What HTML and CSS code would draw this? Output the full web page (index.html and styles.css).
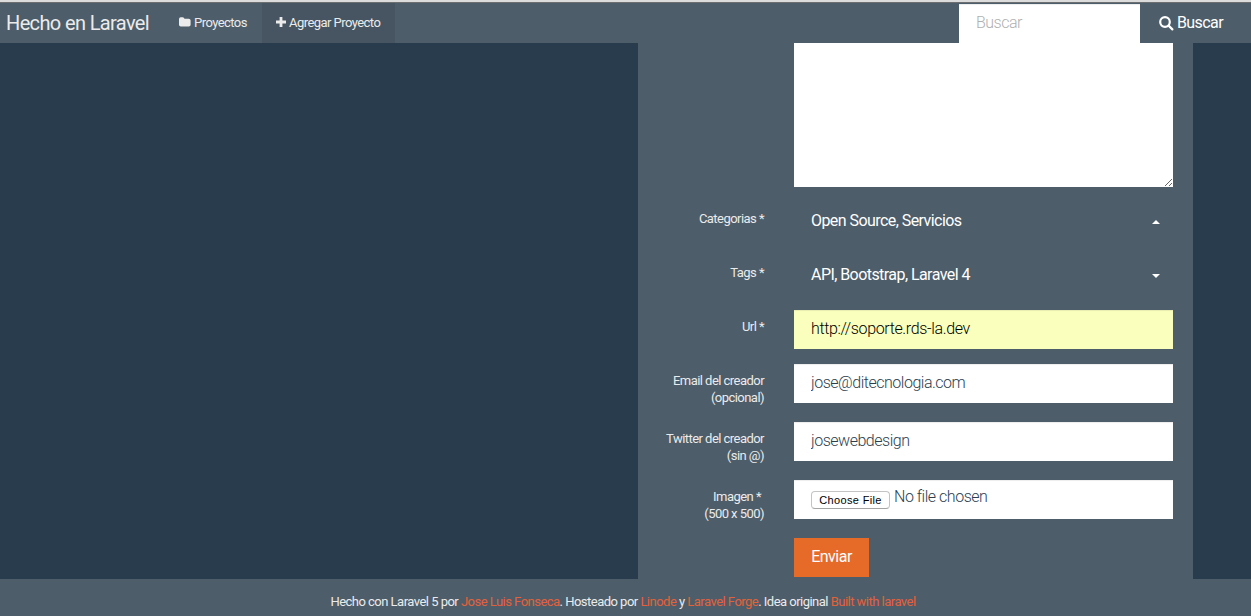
FILE: index.html
```html
<!DOCTYPE html>
<html lang="es">
<head>
<meta charset="utf-8">
<title>Hecho en Laravel</title>
<link rel="stylesheet" href="styles.css">
</head>
<body>
<header class="navbar">
  <a class="brand">Hecho en Laravel</a>
  <nav class="menu">
    <a class="menu-item"><svg class="icon-folder" viewBox="0 0 12 10"><path d="M0 2Q0 .2 1.8.2H3.6Q5.4.2 5.4 1.8H9.8Q11.6 1.8 11.6 3.6V7.8Q11.6 9.6 9.8 9.6H1.8Q0 9.6 0 7.8Z"/></svg><span>Proyectos</span></a>
    <a class="menu-item add active"><svg class="icon-plus" viewBox="0 0 10 10"><path d="M3.6 0H6.4V3.6H10V6.4H6.4V10H3.6V6.4H0V3.6H3.6Z"/></svg><span>Agregar Proyecto</span></a>
  </nav>
  <form class="search">
    <input class="search-input" type="text" placeholder="Buscar">
    <button class="search-button" type="button"><svg class="icon-search" viewBox="0 0 15 15"><circle cx="6" cy="6" r="4.8"/><path d="M9.6 9.6L13.4 13.4"/></svg><span>Buscar</span></button>
  </form>
</header>
<main class="content">
  <form class="panel">
    <div class="row"><span class="label"></span><textarea class="control area"></textarea></div>
    <div class="row"><label class="label">Categorias *</label><div class="control select"><span>Open Source, Servicios</span><svg class="caret" viewBox="0 0 8 4"><path d="M0 4L4 0L8 4Z"/></svg></div></div>
    <div class="row"><label class="label">Tags *</label><div class="control select"><span>API, Bootstrap, Laravel 4</span><svg class="caret" viewBox="0 0 8 4"><path d="M0 0L4 4L8 0Z"/></svg></div></div>
    <div class="row"><label class="label">Url *</label><input class="control filled" type="text" value="http://soporte.rds-la.dev"></div>
    <div class="row"><label class="label">Email del creador<br>(opcional)</label><input class="control" type="text" value="jose@ditecnologia.com"></div>
    <div class="row"><label class="label">Twitter del creador<br>(sin @)</label><input class="control" type="text" value="josewebdesign"></div>
    <div class="row"><label class="label"><span class="first-line">Imagen *</span><br>(500 x 500)</label><div class="control file"><button class="choose" type="button">Choose File</button><span class="file-name">No file chosen</span></div></div>
    <div class="row"><span class="label"></span><button class="submit" type="button">Enviar</button></div>
  </form>
</main>
<footer class="footer"><p class="credits">Hecho con Laravel 5 por <a>Jose Luis Fonseca</a>. Hosteado por <a>Linode</a> y <a>Laravel Forge</a>. Idea original <a>Built with laravel</a></p></footer>
</body>
</html>
```
FILE: styles.css
```css
* { box-sizing: border-box; }
body {
  margin: 0;
  height: 616px;
  display: flex;
  flex-direction: column;
  overflow: hidden;
  background: #4d5d6a;
  color: #ebebeb;
  font: 13px/17px Roboto, sans-serif;
}
input, textarea, button { font-family: inherit; border: 0; border-radius: 0; margin: 0; outline: 0; }
svg { flex: none; fill: currentColor; }
.navbar {
  flex: none;
  display: flex;
  height: 43px;
  border-top: 2px solid #dcdcdc;
  box-shadow: inset 0 1px #6c6f71;
  padding-top: 1px;
}
.brand { width: 164px; padding: 0 0 0 6px; font-size: 20px; line-height: 40px; letter-spacing: -.63px; white-space: nowrap; }
.menu { display: flex; }
.menu-item { display: flex; align-items: center; width: 98px; padding: 0 0 2px 15px; letter-spacing: -.55px; white-space: nowrap; }
.add { width: 133px; padding-left: 14px; }
.active { background: #465561; }
.icon-folder { width: 12px; height: 10px; margin-right: 3px; }
.icon-plus { width: 10px; height: 10px; margin-right: 3px; }
.search { display: flex; margin-left: auto; padding-top: 1px; }
.search-input { width: 181px; height: 39px; padding: 0 17px 2px; background: #fff; font-size: 16px; font-weight: 300; letter-spacing: -.5px; box-shadow: inset 0 1px 1px rgba(0,0,0,.075); }
.search-input::placeholder { color: #b0b0b0; opacity: 1; }
.search-button { display: flex; align-items: center; width: 111px; padding: 0 0 2px 19px; background: none; color: #fff; font-size: 16px; letter-spacing: -.6px; }
.icon-search { width: 15px; height: 15px; margin: 1px 3px 0 0; fill: none; stroke: currentColor; stroke-width: 2.2; stroke-linecap: round; }
.content { flex: none; height: 536px; background: #283c4d; padding-right: 58px; }
.panel { width: 555px; height: 536px; margin-left: auto; padding-right: 20px; background: #4d5d6a; display: flex; flex-direction: column; gap: 15px; }
.row { display: flex; gap: 30px; }
.label { width: 126px; padding: 8px 0 1px; text-align: right; letter-spacing: -.54px; }
.first-line { padding-right: 3px; }
.control { width: 379px; height: 39px; padding: 0 17px 2px; background: #fff; color: #2b3e50; font-size: 16px; font-weight: 300; letter-spacing: -.48px; box-shadow: inset 0 1px 1px rgba(0,0,0,.075); }
.area { height: 144px; resize: vertical; box-shadow: none; }
.select { display: flex; align-items: center; justify-content: space-between; padding: 0 13px 2px 17px; background: none; box-shadow: none; color: #fff; font-weight: 400; letter-spacing: -.56px; }
.caret { width: 8px; height: 4px; margin-top: 3px; }
.filled { background: #faffbd; color: #000; letter-spacing: -.36px; }
.file { display: flex; align-items: flex-start; }
.choose { width: 79px; height: 18px; margin: 11px 4px 0 0; padding: 0; background: #fff; border: 1px solid #c4c4c4; border-bottom-color: #a5a5a5; border-radius: 4px; color: #000; font: 11px/15px "Liberation Sans", sans-serif; letter-spacing: .35px; white-space: nowrap; }
.file-name { padding-top: 8px; }
.submit { width: 75px; height: 39px; padding: 0 0 2px; background: #e66a28; color: #fff; font-size: 16px; letter-spacing: -.5px; }
.footer { flex: 1; display: flex; justify-content: center; padding-top: 14px; }
.credits { margin: 0; padding-right: 5px; letter-spacing: -.52px; white-space: nowrap; }
.credits a { color: #e4623a; }
```
